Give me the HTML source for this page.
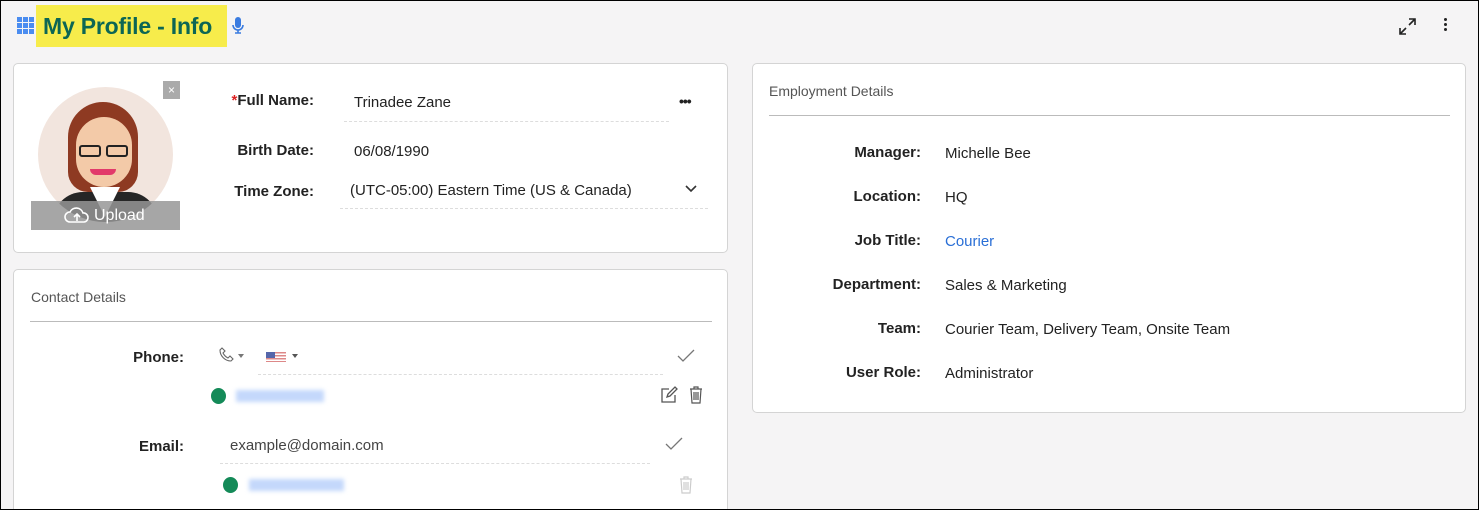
<!DOCTYPE html>
<html><head><style>
*{box-sizing:border-box;margin:0;padding:0}
html{width:1479px;height:510px;overflow:hidden}
body{width:1479px;height:510px;overflow:hidden;background:#f5f4f5;font-family:"Liberation Sans",sans-serif;color:#222;font-size:15px;position:relative}
.frame{position:absolute;left:0;top:0;width:1479px;height:510px;border:1px solid #000;pointer-events:none;z-index:9}
.abs{position:absolute}
.card{position:absolute;background:#fff;border:1px solid #d4d4d4;border-radius:5px}
.lbl{position:absolute;font-weight:bold;text-align:right;font-size:15px;color:#222}
.val{position:absolute;font-size:15px;color:#222}
.dash{position:absolute;border-bottom:1px dashed #ddd}
</style></head><body>
<div class="frame"></div>
<svg class="abs" style="left:17px;top:17px" width="18" height="17" viewBox="0 0 18 17"><g fill="#4a8cf0">
<rect x="0" y="0" width="5" height="5"/><rect x="6" y="0" width="5" height="5"/><rect x="12" y="0" width="5" height="5"/>
<rect x="0" y="6" width="5" height="5"/><rect x="6" y="6" width="5" height="5"/><rect x="12" y="6" width="5" height="5"/>
<rect x="0" y="12" width="5" height="5"/><rect x="6" y="12" width="5" height="5"/><rect x="12" y="12" width="5" height="5"/></g></svg>
<div class="abs" style="left:36px;top:5px;width:191px;height:42px;background:#f7ec4b"></div>
<div class="abs" style="left:43px;top:10px;font-size:23px;font-weight:bold;color:#0c6654;line-height:32px;letter-spacing:-0.2px">My Profile - Info</div>
<svg class="abs" style="left:232px;top:17px" width="12" height="18" viewBox="0 0 12 18"><rect x="3" y="0" width="6" height="11" rx="3" fill="#3a7be0"/><path d="M1 8a5 5 0 0 0 10 0M6 13v3M3 16h6" stroke="#3a7be0" stroke-width="1.6" fill="none"/></svg>
<svg class="abs" style="left:1398px;top:17px" width="19" height="19" viewBox="0 0 19 19"><path d="M11 2h6v6M17 2l-6 6M8 17H2v-6M2 17l6-6" stroke="#222" stroke-width="1.6" fill="none"/></svg>
<div class="abs" style="left:1444px;top:18px;width:3px;height:3px;background:#222;border-radius:50%;box-shadow:0 5px 0 #222,0 10px 0 #222"></div>

<div class="card" style="left:13px;top:63px;width:715px;height:190px">
 <div class="abs" style="left:24px;top:23px;width:135px;height:135px;border-radius:50%;background:#f2e5de;overflow:hidden">
  <div class="abs" style="left:30px;top:15px;width:70px;height:90px;border-radius:35px 35px 20px 20px;background:#8e3a22"></div>
  <div class="abs" style="left:38px;top:30px;width:56px;height:70px;border-radius:28px;background:#f3caa8"></div>
  <div class="abs" style="left:41px;top:58px;width:22px;height:12px;border:2px solid #222;border-radius:3px"></div>
  <div class="abs" style="left:68px;top:58px;width:22px;height:12px;border:2px solid #222;border-radius:3px"></div>
  <div class="abs" style="left:52px;top:82px;width:26px;height:6px;border-radius:0 0 10px 10px;background:#e23a6a"></div>
  <div class="abs" style="left:15px;top:105px;width:105px;height:50px;border-radius:30px 30px 0 0;background:#262626"></div>
  <div class="abs" style="left:52px;top:100px;width:30px;height:30px;background:#fff;clip-path:polygon(0 0,100% 0,50% 100%)"></div>
 </div>
 <div class="abs" style="left:149px;top:17px;width:17px;height:18px;background:#aaa;color:#fff;font-size:12px;text-align:center;line-height:18px">×</div>
 <div class="abs" style="left:17px;top:137px;width:149px;height:29px;background:rgba(150,150,150,.85);color:#fff;font-size:16px;line-height:29px;padding-left:63px">Upload</div>
 <svg class="abs" style="left:50px;top:142px" width="26" height="18" viewBox="0 0 26 18"><path d="M6 16a5 5 0 0 1 0-10 7 7 0 0 1 13 1 4.5 4.5 0 0 1 1 9z M13 15V8M10 11l3-3 3 3" stroke="#fff" stroke-width="1.6" fill="none"/></svg>
 <div class="lbl" style="left:200px;top:28px;width:100px"><span style="color:#d22">*</span>Full Name:</div>
 <div class="val" style="left:340px;top:30px">Trinadee Zane</div>
 <div class="dash" style="left:330px;top:57px;width:325px"></div>
 <div class="abs" style="left:665px;top:29px;font-weight:bold;font-size:14px;letter-spacing:-1px">•••</div>
 <div class="lbl" style="left:200px;top:78px;width:100px">Birth Date:</div>
 <div class="val" style="left:340px;top:79px">06/08/1990</div>
 <div class="lbl" style="left:200px;top:119px;width:100px">Time Zone:</div>
 <div class="val" style="left:336px;top:118px">(UTC-05:00) Eastern Time (US &amp; Canada)</div>
 <svg class="abs" style="left:671px;top:121px" width="12" height="8" viewBox="0 0 12 8"><path d="M1 1l5 5 5-5" stroke="#333" stroke-width="1.6" fill="none"/></svg>
 <div class="dash" style="left:326px;top:144px;width:368px"></div>
</div>

<div class="card" style="left:13px;top:269px;width:715px;height:250px">
 <div class="val" style="left:17px;top:19px;color:#555;font-size:14px">Contact Details</div>
 <div class="abs" style="left:16px;top:51px;width:682px;border-top:1px solid #bbb"></div>
 <div class="lbl" style="left:70px;top:79px;width:100px">Phone:</div>
 <svg class="abs" style="left:204px;top:77px" width="16" height="16" viewBox="0 0 16 16"><path d="M4 1l3 3-2 2c1 2 3 4 5 5l2-2 3 3-2 2C7 14 2 9 2 3z" stroke="#666" stroke-width="1.1" fill="none"/></svg>
 <div class="abs" style="left:224px;top:84px;border:3.5px solid transparent;border-top:4px solid #777"></div>
 <div class="abs" style="left:252px;top:82px;width:20px;height:10px;background:repeating-linear-gradient(#d88 0 1.5px,#fff 1.5px 3px)"></div>
 <div class="abs" style="left:252px;top:82px;width:9px;height:6px;background:#5566aa"></div>
 <div class="abs" style="left:278px;top:84px;border:3px solid transparent;border-top:4px solid #555"></div>
 <svg class="abs" style="left:663px;top:79px" width="18" height="14" viewBox="0 0 18 14"><path d="M1 7l5 5L17 1" stroke="#777" stroke-width="1.3" fill="none"/></svg>
 <div class="dash" style="left:244px;top:104px;width:405px"></div>
 <div class="abs" style="left:197px;top:118px;width:15px;height:16px;border-radius:50%;background:#148a58"></div>
 <div class="abs" style="left:222px;top:120px;width:88px;height:12px;background:#c4d8fb;filter:blur(2px)"></div>
 <svg class="abs" style="left:646px;top:116px" width="18" height="18" viewBox="0 0 18 18"><path d="M9 3H2v13h13V9M7 11l1-3 7-7 2 2-7 7z" stroke="#555" stroke-width="1.3" fill="none"/></svg>
 <svg class="abs" style="left:675px;top:116px" width="14" height="18" viewBox="0 0 14 18"><path d="M1 3h12M5 3V1h4v2M2 3l1 14h8l1-14M5 6v8M7 6v8M9 6v8" stroke="#555" stroke-width="1.2" fill="none"/></svg>
 <div class="lbl" style="left:70px;top:168px;width:100px">Email:</div>
 <div class="val" style="left:216px;top:167px;color:#444">example@domain.com</div>
 <svg class="abs" style="left:651px;top:167px" width="18" height="14" viewBox="0 0 18 14"><path d="M1 7l5 5L17 1" stroke="#777" stroke-width="1.3" fill="none"/></svg>
 <div class="dash" style="left:206px;top:193px;width:430px"></div>
 <div class="abs" style="left:209px;top:207px;width:15px;height:16px;border-radius:50%;background:#148a58"></div>
 <div class="abs" style="left:235px;top:209px;width:95px;height:12px;background:#c4d8fb;filter:blur(2px)"></div>
 <svg class="abs" style="left:665px;top:206px" width="14" height="18" viewBox="0 0 14 18"><path d="M1 3h12M5 3V1h4v2M2 3l1 14h8l1-14M5 6v8M7 6v8M9 6v8" stroke="#ccc" stroke-width="1.2" fill="none"/></svg>
</div>

<div class="card" style="left:752px;top:63px;width:714px;height:350px">
 <div class="val" style="left:16px;top:19px;color:#555;font-size:14px">Employment Details</div>
 <div class="abs" style="left:16px;top:51px;width:681px;border-top:1px solid #bbb"></div>
 <div class="lbl" style="left:40px;top:80px;width:128px">Manager:</div><div class="val" style="left:192px;top:81px">Michelle Bee</div>
 <div class="lbl" style="left:40px;top:124px;width:128px">Location:</div><div class="val" style="left:192px;top:125px">HQ</div>
 <div class="lbl" style="left:40px;top:168px;width:128px">Job Title:</div><div class="val" style="left:192px;top:169px;color:#2a6fd6">Courier</div>
 <div class="lbl" style="left:40px;top:212px;width:128px">Department:</div><div class="val" style="left:192px;top:213px">Sales &amp; Marketing</div>
 <div class="lbl" style="left:40px;top:256px;width:128px">Team:</div><div class="val" style="left:192px;top:257px">Courier Team, Delivery Team, Onsite Team</div>
 <div class="lbl" style="left:40px;top:300px;width:128px">User Role:</div><div class="val" style="left:192px;top:301px">Administrator</div>
</div>
</body></html>
